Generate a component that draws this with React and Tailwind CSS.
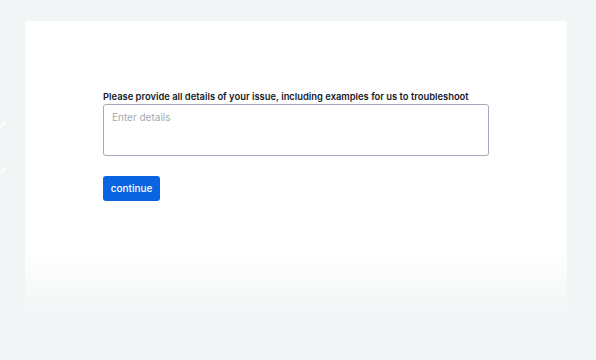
import React from 'react';

function App() {
  return (
    <div className="relative h-[360px] w-[596px] overflow-hidden bg-[#f2f5f6] pt-[21px] pl-[25px] [font-family:Inter,'Noto_Sans',sans-serif]">
      {/* faint marks on the left edge */}
      <div className="absolute left-[-1px] top-[123px] h-[3px] w-[8px] -rotate-45 rounded-full border border-white/90" />
      <div className="absolute left-[-1px] top-[169px] h-[3px] w-[8px] -rotate-45 rounded-full border border-white/90" />

      {/* Card */}
      <div className="h-[294px] w-[542px] rounded-t-[2px] bg-gradient-to-b from-white from-[79%] to-[#f2f5f6] pl-[78px] pt-[70px]">
        <label className="block text-[9.4px] font-semibold leading-[12px] text-[#161b28]">
          Please provide all details of your issue, including examples for us to troubleshoot
        </label>
        <textarea
          placeholder="Enter details"
          className="mt-[1px] block h-[52px] w-[386px] resize-none rounded-[3px] border border-[#a6a9ba] bg-white px-[8px] py-[5px] text-[10px] leading-[14px] text-[#1a1f2c] outline-none placeholder:text-[#a4a8b4]"
        />
        <button className="mt-[20px] flex h-[25px] w-[57px] items-center justify-center rounded-[3px] bg-[#0a63e1] text-[10px] font-medium text-white">
          continue
        </button>
      </div>
    </div>
  );
}

export default App;
